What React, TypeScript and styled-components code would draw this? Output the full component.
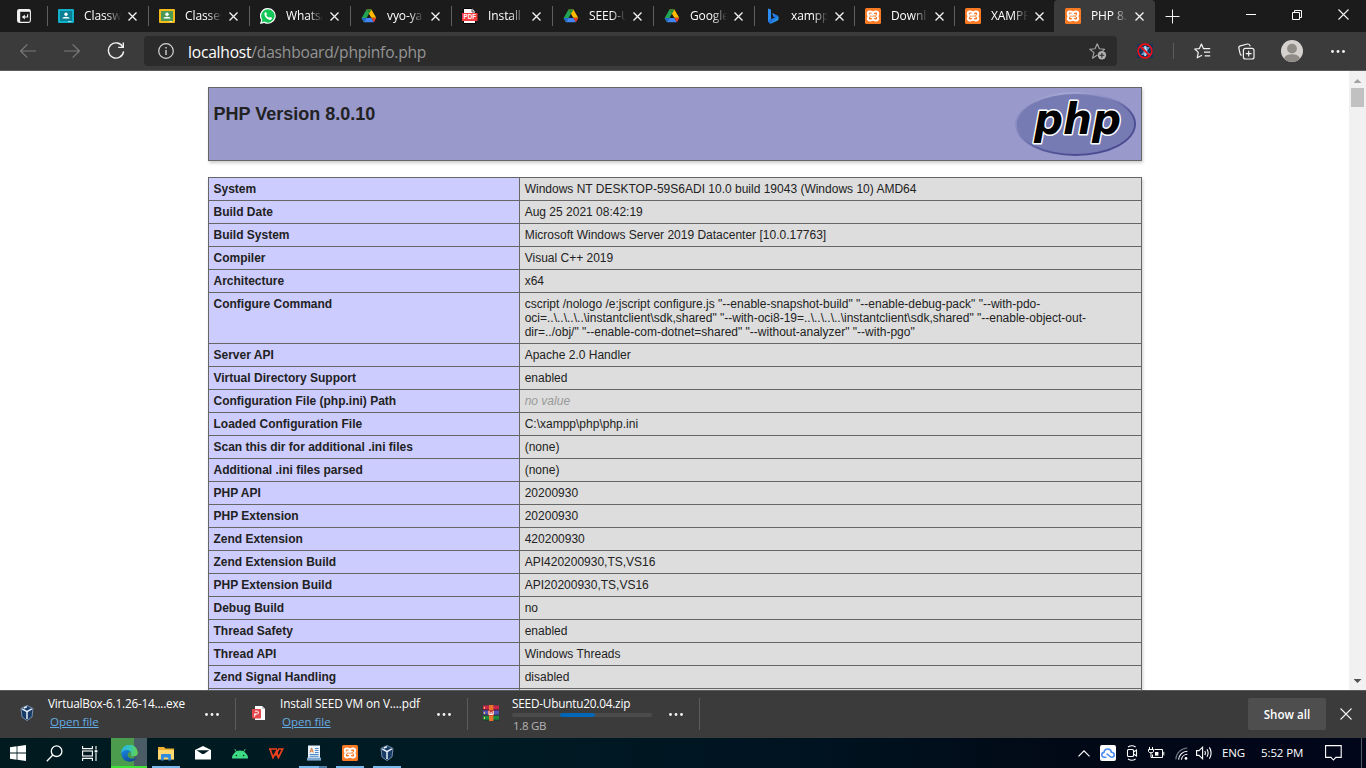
import React from "react";
import styled, { createGlobalStyle } from "styled-components";

const UI_FONT = `"Open Sans", "Noto Sans", sans-serif`;

const GlobalStyle = createGlobalStyle`
  * { box-sizing: border-box; }
  html, body { margin: 0; padding: 0; overflow: hidden; background: #fff; }
  svg { display: block; flex: none; }
`;

const Screen = styled.div`
  width: 1366px;
  height: 768px;
  display: flex;
  flex-direction: column;
  overflow: hidden;
  font-family: ${UI_FONT};
  font-size: 11.5px;
  color: #fff;
`;

/* ---------- tab strip ---------- */
const TabStrip = styled.div`
  height: 32px;
  flex: none;
  display: flex;
  background: #1b1b1b;
`;

const PinnedTab = styled.div`
  width: 47px;
  display: flex;
  align-items: center;
  padding-left: 17px;
`;

const Tab = styled.div<{ $width: number; $active?: boolean }>`
  width: ${(p) => p.$width}px;
  flex: none;
  display: flex;
  align-items: center;
  position: relative;
  background: ${(p) => (p.$active ? "#3b3b3b" : "transparent")};
  border-radius: 4px 4px 0 0;
  padding-left: 11px;
  ${(p) =>
    !p.$active &&
    `&::before {
      content: "";
      position: absolute;
      left: 0;
      top: 6px;
      width: 1px;
      height: 20px;
      background: #5f5f5f;
    }`}
`;

const TabTitle = styled.div`
  width: 37px;
  margin-left: 10px;
  margin-right: 7px;
  overflow: hidden;
  white-space: nowrap;
  font-size: 12px;
  line-height: 18px;
  letter-spacing: -0.1px;
  mask-image: linear-gradient(90deg, #000 60%, transparent 100%);
`;

const NewTab = styled.div`
  width: 35px;
  display: flex;
  align-items: center;
  justify-content: center;
`;

const WindowButtons = styled.div`
  margin-left: auto;
  display: flex;
  height: 29px;
`;

const WindowButton = styled.div`
  width: 46px;
  display: flex;
  align-items: center;
  justify-content: center;
`;

/* ---------- toolbar ---------- */
const Toolbar = styled.div`
  height: 39px;
  flex: none;
  display: flex;
  align-items: center;
  background: #3b3b3b;
  border-bottom: 1px solid #5d5b5c;
`;

const NavButton = styled.div<{ $dim?: boolean }>`
  width: 44px;
  height: 38px;
  display: flex;
  align-items: center;
  justify-content: center;
  color: ${(p) => (p.$dim ? "#7b7b7b" : "#f2f2f2")};
`;

const NavGroup = styled.div`
  display: flex;
  width: 144px;
  padding-left: 6px;
`;

const AddressBar = styled.div`
  width: 973px;
  height: 30px;
  border-radius: 4px;
  background: #2b2b2b;
  display: flex;
  align-items: center;
  padding: 0 10px 0 14px;
`;

const Url = styled.div`
  flex: 1;
  margin-left: 14px;
  padding-top: 2px;
  font-size: 15.6px;
  letter-spacing: -0.22px;
  line-height: 24px;
  color: #949494;
  white-space: nowrap;
  b {
    font-weight: 400;
    color: #fff;
  }
`;

const ToolbarRight = styled.div`
  flex: 1;
  display: flex;
  align-items: center;
  padding-left: 20px;
`;

const ToolbarDivider = styled.div`
  width: 1px;
  height: 16px;
  margin: 0 20px 0 20px;
  background: #5c5c5c;
`;

const Gap = styled.div<{ $w: number }>`
  width: ${(p) => p.$w}px;
  flex: none;
`;

/* ---------- page ---------- */
const Viewport = styled.div`
  height: 619px;
  flex: none;
  display: flex;
  background: #fff;
  overflow: hidden;
`;

const Page = styled.div`
  width: 1349px;
  padding: 16px 0 0 208px;
  font-family: "Liberation Sans", Arial, sans-serif;
  font-size: 12px;
  line-height: 14px;
  color: #222;
`;

const Banner = styled.div`
  width: 934px;
  height: 74px;
  border: 1px solid #666;
  background: #9999cc;
  box-shadow: 1px 2px 3px rgba(0, 0, 0, 0.2);
  display: flex;
  justify-content: space-between;
  padding: 4px 5px 0 4.5px;
  margin-bottom: 16px;
`;

const Title = styled.h1`
  margin: 12px 0 0;
  font-size: 18px;
  line-height: 21px;
  font-weight: bold;
`;

const InfoTable = styled.div`
  width: 934px;
  border: 1px solid #666;
  border-bottom: 0;
  box-shadow: 1px 2px 3px rgba(0, 0, 0, 0.2);
`;

const InfoRow = styled.div`
  display: flex;
  border-bottom: 1px solid #666;
`;

const KeyCell = styled.div`
  width: 311px;
  flex: none;
  padding: 4px 5px 4px 4.5px;
  min-height: 22px;
  background: #ccccff;
  border-right: 1px solid #666;
  font-weight: bold;
`;

const ValueCell = styled.div<{ $none?: boolean }>`
  flex: 1;
  padding: 4px 5px 4px 4.7px;
  background: #dddddd;
  white-space: pre-line;
  ${(p) => p.$none && "font-style: italic; color: #999;"}
`;

const Scrollbar = styled.div`
  width: 17px;
  height: 619px;
  background: #f1f1f1;
  display: flex;
  flex-direction: column;
  align-items: center;
`;

const ScrollThumb = styled.div`
  width: 13px;
  height: 19px;
  margin-top: 5px;
  background: #c1c1c1;
`;

const ScrollArrow = styled.div<{ $down?: boolean }>`
  width: 8px;
  height: 4px;
  margin-top: ${(p) => (p.$down ? "auto" : "8px")};
  margin-bottom: ${(p) => (p.$down ? "7px" : "0")};
  background: ${(p) => (p.$down ? "#505050" : "#a3a3a3")};
  clip-path: ${(p) =>
    p.$down ? "polygon(0 0, 100% 0, 50% 100%)" : "polygon(0 100%, 100% 100%, 50% 0)"};
`;

/* ---------- downloads shelf ---------- */
const Shelf = styled.div`
  height: 48px;
  flex: none;
  display: flex;
  align-items: center;
  background: #3b3b3b;
  border-top: 1px solid #5b5b5b;
  padding: 0 0 1px 4px;
`;

const Download = styled.div`
  width: 232px;
  height: 32px;
  display: flex;
  border-right: 1px solid #5c5c5c;
  padding-left: 15px;
`;

const DownloadIcon = styled.div`
  width: 16px;
  margin-right: 13px;
  padding-top: 7px;
`;

const DownloadText = styled.div`
  width: 141px;
  margin-top: -3px;
  white-space: nowrap;
`;

const FileName = styled.div<{ $spacing?: number }>`
  font-size: 11.8px;
  line-height: 17px;
  letter-spacing: ${(p) => p.$spacing ?? 0}px;
`;

const OpenLink = styled.div`
  margin: 1px 0 0 2px;
  line-height: 17px;
  color: #63ade5;
  text-decoration: underline;
`;

const ProgressTrack = styled.div`
  width: 140px;
  height: 4px;
  margin-top: 1px;
  border-radius: 2px;
  background: #4b4b4b;
  padding-left: 48px;
`;

const ProgressFill = styled.div`
  width: 35px;
  height: 4px;
  border-radius: 2px;
  background: #0067b8;
`;

const SizeText = styled.div`
  margin-left: 1px;
  line-height: 17px;
  letter-spacing: -0.3px;
  color: #b4b4b4;
`;

const DownloadMore = styled.div`
  margin: 15px 0 0 16px;
`;

const ShowAll = styled.div`
  width: 78px;
  height: 32px;
  margin-left: auto;
  margin-right: 14px;
  border-radius: 2px;
  background: #4e4e4e;
  display: flex;
  align-items: center;
  justify-content: center;
  font-weight: 600;
  font-size: 11.6px;
`;

const ShelfClose = styled.div`
  width: 26px;
`;

/* ---------- taskbar ---------- */
const Taskbar = styled.div`
  height: 30px;
  flex: none;
  display: flex;
  background: linear-gradient(90deg, #001a20 0%, #001b24 35%, #001320 60%, #020916 78%, #01061a 100%);
`;

const SystemButton = styled.div`
  width: 36px;
  display: flex;
  align-items: center;
  justify-content: center;
`;

const AppButton = styled.div<{ $state?: "active" | "running" | "multi" }>`
  width: 36.8px;
  display: flex;
  align-items: center;
  justify-content: center;
  position: relative;
  ${(p) =>
    p.$state === "active" &&
    `width: 36px;
     margin: 0 1px 0 3px;
     background: linear-gradient(90deg, #4b9d4d 0 23px, #4a5c65 23px);`}
  &::after {
    content: "";
    position: absolute;
    bottom: 0;
    height: 2px;
    left: ${(p) => (p.$state === "active" ? 0 : 4)}px;
    width: ${(p) => (p.$state === "active" ? 36 : 28)}px;
    background: ${(p) =>
      p.$state === "active"
        ? "#40e438"
        : p.$state === "running"
          ? "#76b9ed"
          : p.$state === "multi"
            ? "linear-gradient(90deg, #76b9ed 0 20px, #4d7ea5 20px)"
            : "transparent"};
  }
`;

const Tray = styled.div`
  margin-left: auto;
  width: 289px;
  display: flex;
  align-items: center;
`;

const TrayText = styled.div<{ $w: number }>`
  width: ${(p) => p.$w}px;
  line-height: 18px;
  white-space: nowrap;
  letter-spacing: -0.1px;
`;

const DesktopEdge = styled.div`
  width: 1px;
  height: 30px;
  margin-left: auto;
  margin-right: 4px;
  background: #555b66;
`;

/* ---------- icons ---------- */
const XamppBox = styled.div`
  width: 16px;
  height: 16px;
  flex: none;
  border-radius: 1.5px;
  background: #fb7a24;
  display: flex;
  align-items: center;
  justify-content: center;
`;

const XamppIcon = () => (
  <XamppBox>
    <svg width="14" height="12" viewBox="0 0 14 12" fill="none" stroke="#fff" strokeWidth="2" strokeLinejoin="round" strokeLinecap="round">
      <path d="M4.4 4.6 H7 M7 3.4 Q6.6 1.6 4.8 1.6 H3.8 Q1.8 1.6 1.8 3.4 Q1.8 5.2 3 6 Q1.8 6.8 1.8 8.6 Q1.8 10.4 3.8 10.4 H4.8 Q6.6 10.4 7 8.6 Q7.4 10.4 9.2 10.4 H10.2 Q12.2 10.4 12.2 8.6 Q12.2 6.8 11 6 Q12.2 5.2 12.2 3.4 Q12.2 1.6 10.2 1.6 H9.2 Q7.4 1.6 7 3.4" />
      <path d="M4.8 4.8 H9.2 M4.8 7.2 H9.2" strokeWidth="1.5" />
    </svg>
  </XamppBox>
);

const ClassroomIcon = ({ border, fill }: { border: string; fill: string }) => (
  <svg width="16" height="16" viewBox="0 0 16 16">
    <rect x="0" y="1" width="16" height="14" rx="1" fill={border} />
    <rect x="2" y="3" width="12" height="10" fill={fill} />
    <circle cx="8" cy="6.2" r="1.7" fill="#fff" />
    <path d="M4.4 10.6 Q4.6 8.8 8 8.8 Q11.4 8.8 11.6 10.6 Z" fill="#fff" />
    <rect x="10" y="13" width="3.4" height="1" fill="#fff" opacity="0.6" />
  </svg>
);

const WhatsAppIcon = () => (
  <svg width="16" height="16" viewBox="0 0 16 16">
    <path d="M8.1 0 A7.9 7.9 0 1 1 4.2 14.9 L0 16 L1.1 12 A7.9 7.9 0 0 1 8.1 0 Z" fill="#fff" />
    <path d="M8.1 1.2 A6.7 6.7 0 1 1 4.4 13.6 L1.7 14.3 L2.4 11.7 A6.7 6.7 0 0 1 8.1 1.2 Z" fill="#14c656" />
    <path d="M5.2 4.2 Q5.8 3.7 6.2 4.4 L6.9 6 Q7 6.5 6.2 7.2 Q7.2 9 9.2 9.8 Q9.9 8.8 10.3 8.9 L12 9.8 Q12.2 11.4 10.4 11.9 Q8.8 12.2 6.6 10.2 Q4.4 8 4.4 6.2 Q4.4 5 5.2 4.2 Z" fill="#fff" />
  </svg>
);

const DriveIcon = () => (
  <svg width="16" height="16" viewBox="0 0 16 16">
    <path d="M5.5 1.5 L8 5.8 L3.1 14.3 L2.6 13.8 L0.7 10.6 Q0.6 10.2 0.8 9.7 Z" fill="#23a455" />
    <path d="M5.5 1.5 H10.4 L15.2 9.7 H10.3 Z" fill="#ffba00" />
    <path d="M5.5 1.5 H10.4 L8 5.8 Z" fill="#1a8d3e" />
    <path d="M0.7 9.9 H5.6 L3.1 14.3 Z" fill="#2265d0" />
    <path d="M5.6 9.9 H10.4 L12.9 14.3 H3.1 Z" fill="#4285f4" />
    <path d="M10.4 9.9 H15.3 L12.9 14.3 Z" fill="#e8402f" />
  </svg>
);

const PdfText = styled.text`
  font: 700 6.4px "Liberation Sans", sans-serif;
  fill: #fff;
`;

const PdfIcon = () => (
  <svg width="16" height="16" viewBox="0 0 16 16">
    <path d="M1.5 0.5 H10 L13.5 4 V15.5 H1.5 Z" fill="#fff" stroke="#000" />
    <path d="M10 0.5 V4 H13.5" fill="#ddd" stroke="#333" strokeWidth="0.8" />
    <rect x="0" y="5" width="15.5" height="8" fill="#f63b3f" />
    <PdfText x="1.6" y="11.3" textLength="12.4" lengthAdjust="spacingAndGlyphs">PDF</PdfText>
  </svg>
);

const BingIcon = () => (
  <svg width="16" height="16" viewBox="0 0 16 16">
    <defs>
      <linearGradient id="bing" x1="0" y1="0" x2="1" y2="1">
        <stop offset="0" stopColor="#37bdff" />
        <stop offset="0.5" stopColor="#1f6fe0" />
        <stop offset="1" stopColor="#2fc8f0" />
      </linearGradient>
    </defs>
    <path d="M3 0.4 L6 1.5 V11 L3 13.8 Z" fill="#2c8df5" />
    <path d="M3 13.5 L6 11 L10 9.5 L8.4 8.8 L7.2 5 L12.6 7.4 Q14.4 8.8 13.4 11.4 Q12.8 12.4 11.6 13 L6 15.8 Q4 15.8 3 13.5 Z" fill="url(#bing)" />
  </svg>
);

const PinnedIcon = () => (
  <svg width="14" height="14" viewBox="0 0 14 14" fill="none" stroke="#f2f2f2" strokeWidth="1.1">
    <rect x="0.6" y="0.6" width="12.8" height="12.8" rx="1.8" />
    <path d="M1 1.8 H13" strokeWidth="2" />
    <path d="M2 1 V13" strokeWidth="2.4" />
    <path d="M10.6 5.2 V8 H5.6" />
    <path d="M7.8 5.6 L5 8 L7.8 10.4 Z" fill="#f2f2f2" stroke="none" />
  </svg>
);

const Cross = ({ size, stroke = 1.3 }: { size: number; stroke?: number }) => (
  <svg width={size} height={size} viewBox={`0 0 ${size} ${size}`} stroke="#f4f4f4" strokeWidth={stroke}>
    <path d={`M0.5 0.5 L${size - 0.5} ${size - 0.5} M${size - 0.5} 0.5 L0.5 ${size - 0.5}`} />
  </svg>
);

const Dots = () => (
  <svg width="14" height="3" viewBox="0 0 14 3" fill="#f4f4f4">
    <circle cx="1.5" cy="1.5" r="1.4" />
    <circle cx="7" cy="1.5" r="1.4" />
    <circle cx="12.5" cy="1.5" r="1.4" />
  </svg>
);

const ArrowIcon = ({ right }: { right?: boolean }) => (
  <svg width="16" height="14" viewBox="0 0 16 14" fill="none" stroke="currentColor" strokeWidth="1.1">
    {right ? <path d="M0 7 H15.4 M8.6 0.4 L15.4 7 L8.6 13.6" /> : <path d="M16 7 H0.6 M7.4 0.4 L0.6 7 L7.4 13.6" />}
  </svg>
);

const ReloadIcon = () => (
  <svg width="18" height="18" viewBox="0 0 18 18" fill="none" stroke="currentColor" strokeWidth="1.4">
    <path d="M15.9 5.2 A7.6 7.6 0 1 0 16.6 9.4" />
    <path d="M16.3 0.6 V5.4 H11.2" />
  </svg>
);

const InfoIcon = () => (
  <svg width="16" height="16" viewBox="0 0 16 16" fill="none" stroke="#d4d4d4" strokeWidth="1.2">
    <circle cx="8" cy="8" r="7.3" />
    <path d="M8 7 V12 M8 4 V5.6" strokeWidth="1.4" />
  </svg>
);

const AddFavIcon = () => (
  <svg width="18" height="17" viewBox="0 0 18 17" fill="none" stroke="#a5a5a5" strokeWidth="1.1" strokeLinejoin="round">
    <path d="M8.4 12 L3.5 15.2 L5 9.6 L0.8 6.2 L6 5.8 L8.2 0.8 L10.4 5.8 L15.6 6.2 L13.6 7.8" />
    <circle cx="12.9" cy="12.3" r="4.2" fill="#b1b1b1" stroke="none" />
    <path d="M12.9 9.9 V14.7 M10.5 12.3 H15.3" stroke="#2b2b2b" />
  </svg>
);

const ExtensionIcon = () => (
  <svg width="16" height="16" viewBox="0 0 16 16" fill="none">
    <rect x="0" y="1" width="16" height="14" rx="1" fill="#16365c" />
    <path d="M3 4 H13 L10 8 L14 12 H4 L7 8 Z" fill="#5d97c6" />
    <path d="M8 3 L9 8 L8 13" stroke="#b9d6ec" strokeWidth="2" />
    <circle cx="8" cy="8" r="6.9" stroke="#f00c12" strokeWidth="1.6" />
    <path d="M3.2 3.2 L12.8 12.8" stroke="#f00c12" strokeWidth="1.8" />
  </svg>
);

const FavoritesIcon = () => (
  <svg width="17" height="16" viewBox="0 0 17 16" fill="none" stroke="#f2f2f2" strokeWidth="1.2" strokeLinejoin="round">
    <path d="M8 12.2 L3.2 14.8 L4.3 9.4 L0.8 6 L5.4 5.6 L7.4 1 L9.4 5.6 H16.2" />
    <path d="M10 9.2 H16.2 M10.8 12.8 H16.2" />
  </svg>
);

const CollectionsIcon = () => (
  <svg width="17" height="17" viewBox="0 0 17 17" fill="none" stroke="#f2f2f2" strokeWidth="1.2">
    <rect x="5.4" y="5.4" width="10.6" height="10.6" rx="2" />
    <path d="M10.7 7.8 V13.6 M7.8 10.7 H13.6" />
    <path d="M3.6 12.4 Q2.4 12 2.1 10.6 L0.8 5 Q0.6 3.2 2.3 2.8 L9.4 1 Q11.4 0.8 12 2.8 L12.2 3.4" />
  </svg>
);

const ProfileIcon = () => (
  <svg width="22" height="22" viewBox="0 0 22 22">
    <circle cx="11" cy="11" r="11" fill="#d4d1ce" />
    <circle cx="11" cy="8.6" r="4.9" fill="#8f8b87" />
    <path d="M3 18.4 Q4.6 14.2 11 14.2 Q17.4 14.2 19 18.4 A11 11 0 0 1 3 18.4 Z" fill="#8f8b87" />
  </svg>
);

const PhpWord = styled.text`
  font: italic 700 42px "DejaVu Sans", sans-serif;
  fill: #000;
  stroke: #fff;
  stroke-width: 3px;
  stroke-linejoin: round;
  paint-order: stroke;
`;

const PhpLogo = () => (
  <svg width="121" height="64" viewBox="0 0 121 64">
    <defs>
      <linearGradient id="rim" x1="0.15" y1="0" x2="0.8" y2="1">
        <stop offset="0" stopColor="#b4b8dc" />
        <stop offset="0.32" stopColor="#8c90c4" />
        <stop offset="0.6" stopColor="#4f5196" />
        <stop offset="1" stopColor="#484a90" />
      </linearGradient>
      <linearGradient id="fade" x1="0" y1="0" x2="1" y2="0">
        <stop offset="0" stopColor="#8488bf" />
        <stop offset="0.4" stopColor="#777bb3" stopOpacity="0" />
      </linearGradient>
    </defs>
    <ellipse cx="60.5" cy="32" rx="60.5" ry="32" fill="url(#rim)" />
    <ellipse cx="60.5" cy="32" rx="60.5" ry="32" fill="url(#fade)" opacity="0.6" />
    <ellipse cx="60.5" cy="32" rx="58.6" ry="30" fill="#777bb3" />
    <PhpWord x="19" y="42" textLength="87" lengthAdjust="spacingAndGlyphs">php</PhpWord>
  </svg>
);

const VirtualBoxIcon = () => (
  <svg width="16" height="16" viewBox="0 0 16 16">
    <path d="M8 0.5 L14 3.4 L13 12 L8 15.6 L3 12 L2 3.4 Z" fill="#173a66" stroke="#8ba6c4" strokeWidth="0.8" />
    <path d="M3.2 3.8 L8 6.6 L12.8 3.8 M8 6.6 V14 M8 1.6 L5 3" fill="none" stroke="#e8f0f8" strokeWidth="1.5" />
  </svg>
);

const PdfFileIcon = () => (
  <svg width="16" height="16" viewBox="0 0 16 16">
    <path d="M4 1 H11 L14 4 V15 H4 Z" fill="#fff" />
    <path d="M11 1 L14 4 H11 Z" fill="#cfcfcf" />
    <rect x="1" y="4" width="9" height="9.6" rx="1" fill="#e4474b" />
    <path d="M3.4 11.8 L4.4 8.4 M4 6.2 H6.4 Q7.8 6.4 7.4 8 Q7 9.2 5 9.2 H3" fill="none" stroke="#fff" strokeWidth="1" />
  </svg>
);

const RarIcon = () => (
  <svg width="16" height="16" viewBox="0 0 16 16">
    <rect y="0.5" width="16" height="4.8" fill="#c8244c" />
    <rect y="5.4" width="16" height="5" fill="#5353b4" />
    <rect y="10.5" width="16" height="5" fill="#178a3c" />
    <path d="M0 4.8 H16 M0 10 H16 M0 15.2 H16" stroke="#2a1a30" strokeWidth="0.8" />
    <rect x="6" y="0" width="4.4" height="16" fill="#e8742c" />
    <rect x="5" y="5" width="6" height="5.6" fill="#c23a30" />
    <path d="M6 6 V9.4 H10.2 V6 M8.1 7 V9.4" stroke="#fff" fill="none" />
    <path d="M1.4 1.8 V3.8 M1.4 7 V9 M1.4 12 V14" stroke="#ffd75a" />
  </svg>
);

const StartIcon = () => (
  <svg width="16" height="16" viewBox="0 0 16 16" fill="#fff">
    <path d="M0 2.2 L6.6 1.3 V7.6 H0 Z M7.4 1.2 L16 0 V7.6 H7.4 Z M0 8.4 H6.6 V14.7 L0 13.8 Z M7.4 8.4 H16 V16 L7.4 14.8 Z" />
  </svg>
);

const SearchIcon = () => (
  <svg width="17" height="17" viewBox="0 0 17 17" fill="none" stroke="#fff" strokeWidth="1.3">
    <circle cx="10.6" cy="6.2" r="5.3" />
    <path d="M6.8 10 L0.8 16.2" />
  </svg>
);

const TaskViewIcon = () => (
  <svg width="16" height="15" viewBox="0 0 16 15" fill="none" stroke="#fff" strokeWidth="1.1">
    <path d="M0.6 0 V2.6 H10.4 V0 M0.6 15 V12.4 H10.4 V15" />
    <rect x="0.6" y="5" width="9.8" height="5" />
    <path d="M14 0 V3.4 M14 7 V15" />
    <path d="M12.6 5.3 H15.4" strokeWidth="2.2" />
  </svg>
);

const EdgeIcon = () => (
  <svg width="17" height="17" viewBox="0 0 17 17">
    <defs>
      <linearGradient id="edgeTop" x1="0" y1="0.3" x2="1" y2="0.4">
        <stop offset="0" stopColor="#2ab1e6" />
        <stop offset="0.5" stopColor="#35c4b8" />
        <stop offset="1" stopColor="#62d34c" />
      </linearGradient>
      <linearGradient id="edgeBody" x1="0" y1="0" x2="0.6" y2="1">
        <stop offset="0" stopColor="#1a8be0" />
        <stop offset="1" stopColor="#104a9c" />
      </linearGradient>
    </defs>
    <path d="M0.2 8.2 A8.3 8.3 0 0 1 16.8 7.6 Q17 11 13 11.2 Q9.6 11.2 9.9 9.8 Q11 8.2 9.4 6.6 Q5.2 3.8 0.2 8.2 Z" fill="url(#edgeTop)" />
    <path d="M0.2 8.6 Q1.6 4.8 5.8 5 Q8.6 5.2 9.6 7 Q6.4 7.4 6.6 10.2 Q7.4 13.6 11.4 13.6 Q13.4 13.6 15.6 12.4 Q13.4 16.8 8.6 16.8 Q1.2 16.6 0.2 8.6 Z" fill="url(#edgeBody)" />
  </svg>
);

const FolderIcon = () => (
  <svg width="16" height="15" viewBox="0 0 16 15">
    <path d="M0 1 H6 L7.4 2.6 H16 V13 H0 Z" fill="#f0b132" />
    <rect x="0" y="4" width="16" height="9.6" fill="#ffd970" />
    <path d="M3 14.6 V9.2 Q3 8 4.2 8 H11.8 Q13 8 13 9.2 V14.6 H10.2 V11.4 H5.8 V14.6 Z" fill="#2f8be0" />
  </svg>
);

const MailIcon = () => (
  <svg width="16" height="14" viewBox="0 0 16 14">
    <path d="M0 4 L8 0 L16 4 V13.4 H0 Z" fill="#fff" />
    <path d="M1.6 4.2 H14.4 L8.8 8 H7.2 Z" fill="#001a22" />
  </svg>
);

const AndroidIcon = () => (
  <svg width="16" height="11" viewBox="0 0 16 11">
    <path d="M4.6 4.4 L2.8 1 M11.4 4.4 L13.2 1" fill="none" stroke="#3ddc84" strokeWidth="0.9" />
    <path d="M0 10.4 A8 7.8 0 0 1 16 10.4 Z" fill="#3ddc84" />
    <circle cx="4.4" cy="7.6" r="0.8" fill="#06301f" />
    <circle cx="11.6" cy="7.6" r="0.8" fill="#06301f" />
  </svg>
);

const WpsIcon = () => (
  <svg width="15" height="11" viewBox="0 0 15 11" fill="none" stroke="#f0401f" strokeWidth="1.7">
    <path d="M0 1 H8 M1 1 L4 9.6 L7.4 3.4 L9.4 9.6 L13.6 1 H9.6 L6.6 7.6" />
  </svg>
);

const NotepadIcon = () => (
  <svg width="14" height="16" viewBox="0 0 14 16">
    <rect x="1" y="0.5" width="12" height="13" fill="#eaf3fb" />
    <rect x="0" y="12.6" width="14" height="3" fill="#7fa9d2" />
    <path d="M3 7.6 L4.6 3 L6.2 7.6 M3.6 6 H5.6" stroke="#d9772c" fill="none" />
    <path d="M8 3.5 H11.6 M8 5.5 H11.6 M8 7.5 H11.6 M2.6 9.5 H11.6 M2.6 11.3 H11.6" stroke="#4a86c4" />
  </svg>
);

const ChevronUp = () => (
  <svg width="12" height="7" viewBox="0 0 12 7" fill="none" stroke="#fff" strokeWidth="1.2">
    <path d="M0.5 6.4 L6 0.9 L11.5 6.4" />
  </svg>
);

const CloudIcon = () => (
  <svg width="16" height="16" viewBox="0 0 16 16">
    <rect width="16" height="16" rx="2" fill="#fff" />
    <path d="M6.4 12.2 H4.2 Q1.8 12 1.8 9.8 Q1.8 7.6 4 7.4 Q4.4 4 7.8 4 Q11 4 11.4 7.2 Q14.2 7.4 14.2 9.8 Q14.2 12.2 11.8 12.2 Q10.4 12.2 9.4 11 L6.6 8.6" fill="none" stroke="#4a8cf0" strokeWidth="1.6" />
  </svg>
);

const MeetIcon = () => (
  <svg width="12" height="16" viewBox="0 0 12 16" fill="none" stroke="#fff" strokeWidth="1.1">
    <rect x="1.5" y="4.5" width="6" height="7" rx="1" />
    <path d="M7.5 7 L10.5 5 V11 L7.5 9 M2 2 Q6 -0.6 9.6 2 M2 14 Q6 16.6 9.6 14" />
  </svg>
);

const BatteryIcon = () => (
  <svg width="17" height="12" viewBox="0 0 17 12" fill="none" stroke="#fff" strokeWidth="1">
    <path d="M6.5 2.5 H14.5 V10.5 H4.5 V7.5 M15.8 4.8 V8.4" />
    <rect x="7" y="5" width="3.4" height="3.6" fill="#fff" stroke="none" />
    <path d="M1.5 0 V2 M4.5 0 V2 M0.5 2.5 H5.5 V4.4 Q5.4 5.8 3 5.8 Q0.8 5.8 0.5 4.4 Z M3 5.8 V10.5 H4.6" />
  </svg>
);

const WifiIcon = () => (
  <svg width="13" height="13" viewBox="0 0 13 13" fill="none" stroke="#fff" strokeWidth="1.1">
    <path d="M0.8 12.4 A12 12 0 0 1 12.4 1" stroke="#717784" />
    <path d="M3.6 12.6 A9 9 0 0 1 12.4 4.2" />
    <path d="M6.4 12.6 A6.2 6.2 0 0 1 12.4 7.2" />
    <circle cx="11" cy="11.4" r="1.4" fill="#fff" stroke="none" />
  </svg>
);

const VolumeIcon = () => (
  <svg width="17" height="14" viewBox="0 0 17 14" fill="none" stroke="#fff" strokeWidth="1.1">
    <path d="M0.6 4.6 H3 L6.6 1.2 V12.8 L3 9.4 H0.6 Z" />
    <path d="M8.8 5 Q10 7 8.8 9 M11 3.2 Q13.2 7 11 10.8 M13.4 1.4 Q16.8 7 13.4 12.6" />
  </svg>
);

const NotificationIcon = () => (
  <svg width="17" height="16" viewBox="0 0 17 16" fill="none" stroke="#fff" strokeWidth="1.1">
    <path d="M0.6 0.6 H16.2 V12.4 H10.8 L8.4 15 L6 12.4 H0.6 Z" />
  </svg>
);

/* ---------- data ---------- */
type TabInfo = { title: string; icon: React.ReactNode; width: number; active?: boolean };

const tabs: TabInfo[] = [
  { title: "Classw", icon: <ClassroomIcon border="#12b0c8" fill="#0b7f93" />, width: 101 },
  { title: "Classes", icon: <ClassroomIcon border="#f6bb18" fill="#4d9a56" />, width: 101 },
  { title: "WhatsA", icon: <WhatsAppIcon />, width: 101 },
  { title: "vyo-ya", icon: <DriveIcon />, width: 101 },
  { title: "Install S", icon: <PdfIcon />, width: 101 },
  { title: "SEED-U", icon: <DriveIcon />, width: 101 },
  { title: "Google", icon: <DriveIcon />, width: 101 },
  { title: "xampp", icon: <BingIcon />, width: 100 },
  { title: "Downl", icon: <XamppIcon />, width: 100 },
  { title: "XAMPP", icon: <XamppIcon />, width: 100 },
  { title: "PHP 8.", icon: <XamppIcon />, width: 101, active: true },
];

const configureCommand = `cscript /nologo /e:jscript configure.js "--enable-snapshot-build" "--enable-debug-pack" "--with-pdo-
oci=..\\..\\..\\..\\instantclient\\sdk,shared" "--with-oci8-19=..\\..\\..\\..\\instantclient\\sdk,shared" "--enable-object-out-
dir=../obj/" "--enable-com-dotnet=shared" "--without-analyzer" "--with-pgo"`;

const info: [string, string][] = [
  ["System", "Windows NT DESKTOP-59S6ADI 10.0 build 19043 (Windows 10) AMD64"],
  ["Build Date", "Aug 25 2021 08:42:19"],
  ["Build System", "Microsoft Windows Server 2019 Datacenter [10.0.17763]"],
  ["Compiler", "Visual C++ 2019"],
  ["Architecture", "x64"],
  ["Configure Command", configureCommand],
  ["Server API", "Apache 2.0 Handler"],
  ["Virtual Directory Support", "enabled"],
  ["Configuration File (php.ini) Path", "no value"],
  ["Loaded Configuration File", "C:\\xampp\\php\\php.ini"],
  ["Scan this dir for additional .ini files", "(none)"],
  ["Additional .ini files parsed", "(none)"],
  ["PHP API", "20200930"],
  ["PHP Extension", "20200930"],
  ["Zend Extension", "420200930"],
  ["Zend Extension Build", "API420200930,TS,VS16"],
  ["PHP Extension Build", "API20200930,TS,VS16"],
  ["Debug Build", "no"],
  ["Thread Safety", "enabled"],
  ["Thread API", "Windows Threads"],
  ["Zend Signal Handling", "disabled"],
  ["", ""],
];

export default function App() {
  return (
    <Screen>
      <GlobalStyle />
      <TabStrip>
        <PinnedTab><PinnedIcon /></PinnedTab>
        {tabs.map((t) => (
          <Tab key={t.title} $width={t.width} $active={t.active}>
            {t.icon}
            <TabTitle>{t.title}</TabTitle>
            <Cross size={9} />
          </Tab>
        ))}
        <NewTab>
          <svg width="15" height="15" viewBox="0 0 15 15" stroke="#f2f2f2" strokeWidth="1">
            <path d="M7.5 0.5 V14.5 M0.5 7.5 H14.5" />
          </svg>
        </NewTab>
        <WindowButtons>
          <WindowButton>
            <svg width="10" height="1" viewBox="0 0 10 1"><path d="M0 0.5 H10" stroke="#fff" /></svg>
          </WindowButton>
          <WindowButton>
            <svg width="10" height="10" viewBox="0 0 10 10" fill="none" stroke="#fff">
              <path d="M0.5 2.5 H7.5 V9.5 H0.5 Z M2.5 2.5 V0.5 H9.5 V7.5 H7.5" />
            </svg>
          </WindowButton>
          <WindowButton><Cross size={11} stroke={1.1} /></WindowButton>
        </WindowButtons>
      </TabStrip>

      <Toolbar>
        <NavGroup>
          <NavButton $dim><ArrowIcon /></NavButton>
          <NavButton $dim><ArrowIcon right /></NavButton>
          <NavButton><ReloadIcon /></NavButton>
        </NavGroup>
        <AddressBar>
          <InfoIcon />
          <Url><b>localhost</b>/dashboard/phpinfo.php</Url>
          <AddFavIcon />
        </AddressBar>
        <ToolbarRight>
          <ExtensionIcon />
          <ToolbarDivider />
          <FavoritesIcon />
          <Gap $w={27} />
          <CollectionsIcon />
          <Gap $w={26} />
          <ProfileIcon />
          <Gap $w={28} />
          <Dots />
        </ToolbarRight>
      </Toolbar>

      <Viewport>
        <Page>
          <Banner>
            <Title>PHP Version 8.0.10</Title>
            <PhpLogo />
          </Banner>
          <InfoTable>
            {info.map(([key, value]) => (
              <InfoRow key={key}>
                <KeyCell>{key}</KeyCell>
                <ValueCell $none={value === "no value"}>{value}</ValueCell>
              </InfoRow>
            ))}
          </InfoTable>
        </Page>
        <Scrollbar>
          <ScrollArrow />
          <ScrollThumb />
          <ScrollArrow $down />
        </Scrollbar>
      </Viewport>

      <Shelf>
        <Download>
          <DownloadIcon><VirtualBoxIcon /></DownloadIcon>
          <DownloadText>
            <FileName $spacing={-0.22}>VirtualBox-6.1.26-14....exe</FileName>
            <OpenLink>Open file</OpenLink>
          </DownloadText>
          <DownloadMore><Dots /></DownloadMore>
        </Download>
        <Download>
          <DownloadIcon><PdfFileIcon /></DownloadIcon>
          <DownloadText>
            <FileName $spacing={-0.12}>Install SEED VM on V....pdf</FileName>
            <OpenLink>Open file</OpenLink>
          </DownloadText>
          <DownloadMore><Dots /></DownloadMore>
        </Download>
        <Download>
          <DownloadIcon><RarIcon /></DownloadIcon>
          <DownloadText>
            <FileName $spacing={-0.22}>SEED-Ubuntu20.04.zip</FileName>
            <ProgressTrack><ProgressFill /></ProgressTrack>
            <SizeText>1.8 GB</SizeText>
          </DownloadText>
          <DownloadMore><Dots /></DownloadMore>
        </Download>
        <ShowAll>Show all</ShowAll>
        <ShelfClose><Cross size={12} stroke={1.1} /></ShelfClose>
      </Shelf>

      <Taskbar>
        <SystemButton><StartIcon /></SystemButton>
        <SystemButton><SearchIcon /></SystemButton>
        <SystemButton><TaskViewIcon /></SystemButton>
        <AppButton $state="active"><EdgeIcon /></AppButton>
        <AppButton $state="running"><FolderIcon /></AppButton>
        <AppButton><MailIcon /></AppButton>
        <AppButton><AndroidIcon /></AppButton>
        <AppButton><WpsIcon /></AppButton>
        <AppButton $state="multi"><NotepadIcon /></AppButton>
        <AppButton $state="running"><XamppIcon /></AppButton>
        <AppButton $state="running"><VirtualBoxIcon /></AppButton>
        <Tray>
          <Gap $w={1} />
          <ChevronUp />
          <Gap $w={10} />
          <CloudIcon />
          <Gap $w={10} />
          <MeetIcon />
          <Gap $w={10} />
          <BatteryIcon />
          <Gap $w={10} />
          <WifiIcon />
          <Gap $w={8} />
          <VolumeIcon />
          <Gap $w={9} />
          <TrayText $w={39}>ENG</TrayText>
          <TrayText $w={64}>5:52 PM</TrayText>
          <NotificationIcon />
          <DesktopEdge />
        </Tray>
      </Taskbar>
    </Screen>
  );
}
